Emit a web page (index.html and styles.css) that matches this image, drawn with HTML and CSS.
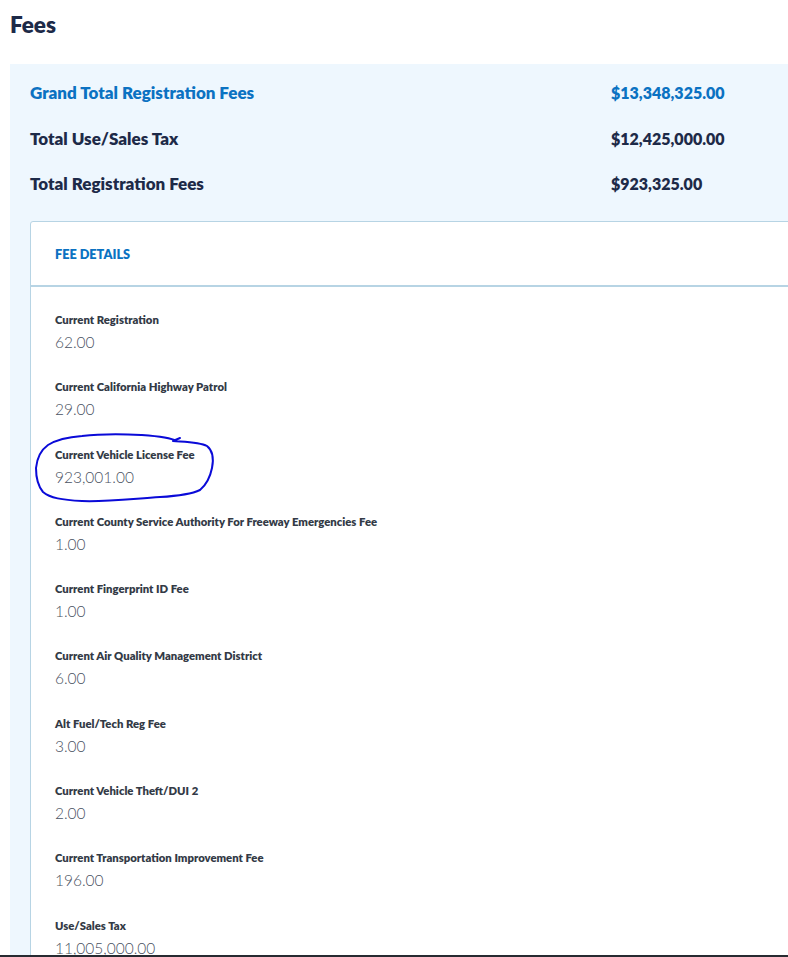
FILE: index.html
```html
<!DOCTYPE html>
<html lang="en">
	<head>
		<meta charset="UTF-8" />
		<meta name="viewport" content="width=device-width, initial-scale=1.0" />
		<title>Fees</title>
		<link rel="stylesheet" href="styles.css">
	</head>

	<body>
		<div id="page">
			<h2 class="pageTitle">Fees</h2>

			<div class="feesPanel">
				<div class="totalRow grand">
					<span class="totalLabel">Grand Total Registration Fees</span>
					<span class="totalValue">$13,348,325.00</span>
				</div>
				<div class="totalRow">
					<span class="totalLabel">Total Use/Sales Tax</span>
					<span class="totalValue">$12,425,000.00</span>
				</div>
				<div class="totalRow">
					<span class="totalLabel">Total Registration Fees</span>
					<span class="totalValue">$923,325.00</span>
				</div>

				<div class="detailCard">
					<div class="detailHead">FEE DETAILS</div>
					<div class="detailBody">
						<div class="feeItem">
							<div class="feeLabel">Current Registration</div>
							<div class="feeValue">62.00</div>
						</div>
						<div class="feeItem">
							<div class="feeLabel">Current California Highway Patrol</div>
							<div class="feeValue">29.00</div>
						</div>
						<div class="feeItem marked">
							<div class="feeLabel">Current Vehicle License Fee</div>
							<div class="feeValue">923,001.00</div>
							<!-- hand drawn mark -->
							<svg class="penMark" width="200" height="80" viewBox="0 0 200 80">
								<path d="M146 13 C140 9 125 8 111 7 C90 6 70 6 52 8 C38 9 26 12 18 17 C11 22 7 30 6 40 C6 50 8 58 13 64 C20 70 32 72 52 73 C75 74 100 71 130 69 C148 68 162 66 170 62 C176 57 180 50 182 40 C184 30 182 22 177 18 C170 14 158 14 143 13 L150 10"
									fill="none" stroke="#0a0ad8" stroke-width="2" stroke-linecap="round" stroke-linejoin="round"/>
							</svg>
						</div>
						<div class="feeItem">
							<div class="feeLabel">Current County Service Authority For Freeway Emergencies Fee</div>
							<div class="feeValue">1.00</div>
						</div>
						<div class="feeItem">
							<div class="feeLabel">Current Fingerprint ID Fee</div>
							<div class="feeValue">1.00</div>
						</div>
						<div class="feeItem">
							<div class="feeLabel">Current Air Quality Management District</div>
							<div class="feeValue">6.00</div>
						</div>
						<div class="feeItem">
							<div class="feeLabel">Alt Fuel/Tech Reg Fee</div>
							<div class="feeValue">3.00</div>
						</div>
						<div class="feeItem">
							<div class="feeLabel">Current Vehicle Theft/DUI 2</div>
							<div class="feeValue">2.00</div>
						</div>
						<div class="feeItem">
							<div class="feeLabel">Current Transportation Improvement Fee</div>
							<div class="feeValue">196.00</div>
						</div>
						<div class="feeItem">
							<div class="feeLabel">Use/Sales Tax</div>
							<div class="feeValue">11,005,000.00</div>
						</div>
					</div>
				</div>
			</div>
		</div>
		<div class="bottomEdge"></div>
	</body>
</html>
```

FILE: styles.css
```css
* {
	margin: 0;
	padding: 0;
	box-sizing: border-box;
}

html, body {
	width: 100%;
	height: 100%;
	overflow: hidden;
}
body {
	background-color: #ffffff;
	font-family: Lato, "Open Sans", Arial, sans-serif;
	color: #1d2a48;
}
#page {
	width: 1200px;
	padding-left: 10px;
}

.pageTitle {
	font-size: 22.5px;
	line-height: 26px;
	font-weight: 800;
	padding-top: 12px;
	height: 64px;
	color: #1d2a48;
}

.feesPanel {
	background-color: #eef7fe;
	padding: 6px 0 0 20px;
}
.totalRow {
	display: grid;
	grid-template-columns: 581px auto;
	height: 45.5px;
	align-items: center;
	font-weight: 800;
	color: #1d2a48;
}
.totalLabel {
	font-size: 17px;
}
.totalValue {
	font-size: 16px;
}
.totalRow.grand {
	color: #0b72c2;
}

.detailCard {
	margin-top: 14.5px;
	background-color: #ffffff;
	border: 1px solid #b7d4e4;
	border-radius: 3px 0 0 0;
}
.detailHead {
	height: 65px;
	display: flex;
	align-items: center;
	padding-left: 24px;
	font-size: 12.7px;
	font-weight: 800;
	color: #0b72c2;
	border-bottom: 2px solid #b7d4e4;
}
.detailBody {
	padding: 26px 0 0 24px;
}
.feeItem {
	position: relative;
	margin-bottom: 28.3px;
}
.feeLabel {
	font-size: 11.3px;
	line-height: 14px;
	font-weight: 800;
	color: #333a46;
	margin-bottom: 5px;
}
.feeValue {
	font-size: 15.5px;
	line-height: 20px;
	font-weight: 300;
	color: #4a5262;
}
.penMark {
	position: absolute;
	left: -25px;
	top: -20px;
	overflow: visible;
}

.bottomEdge {
	position: fixed;
	left: 0;
	right: 0;
	bottom: 0;
	height: 2px;
	background-color: #272b31;
}
```
